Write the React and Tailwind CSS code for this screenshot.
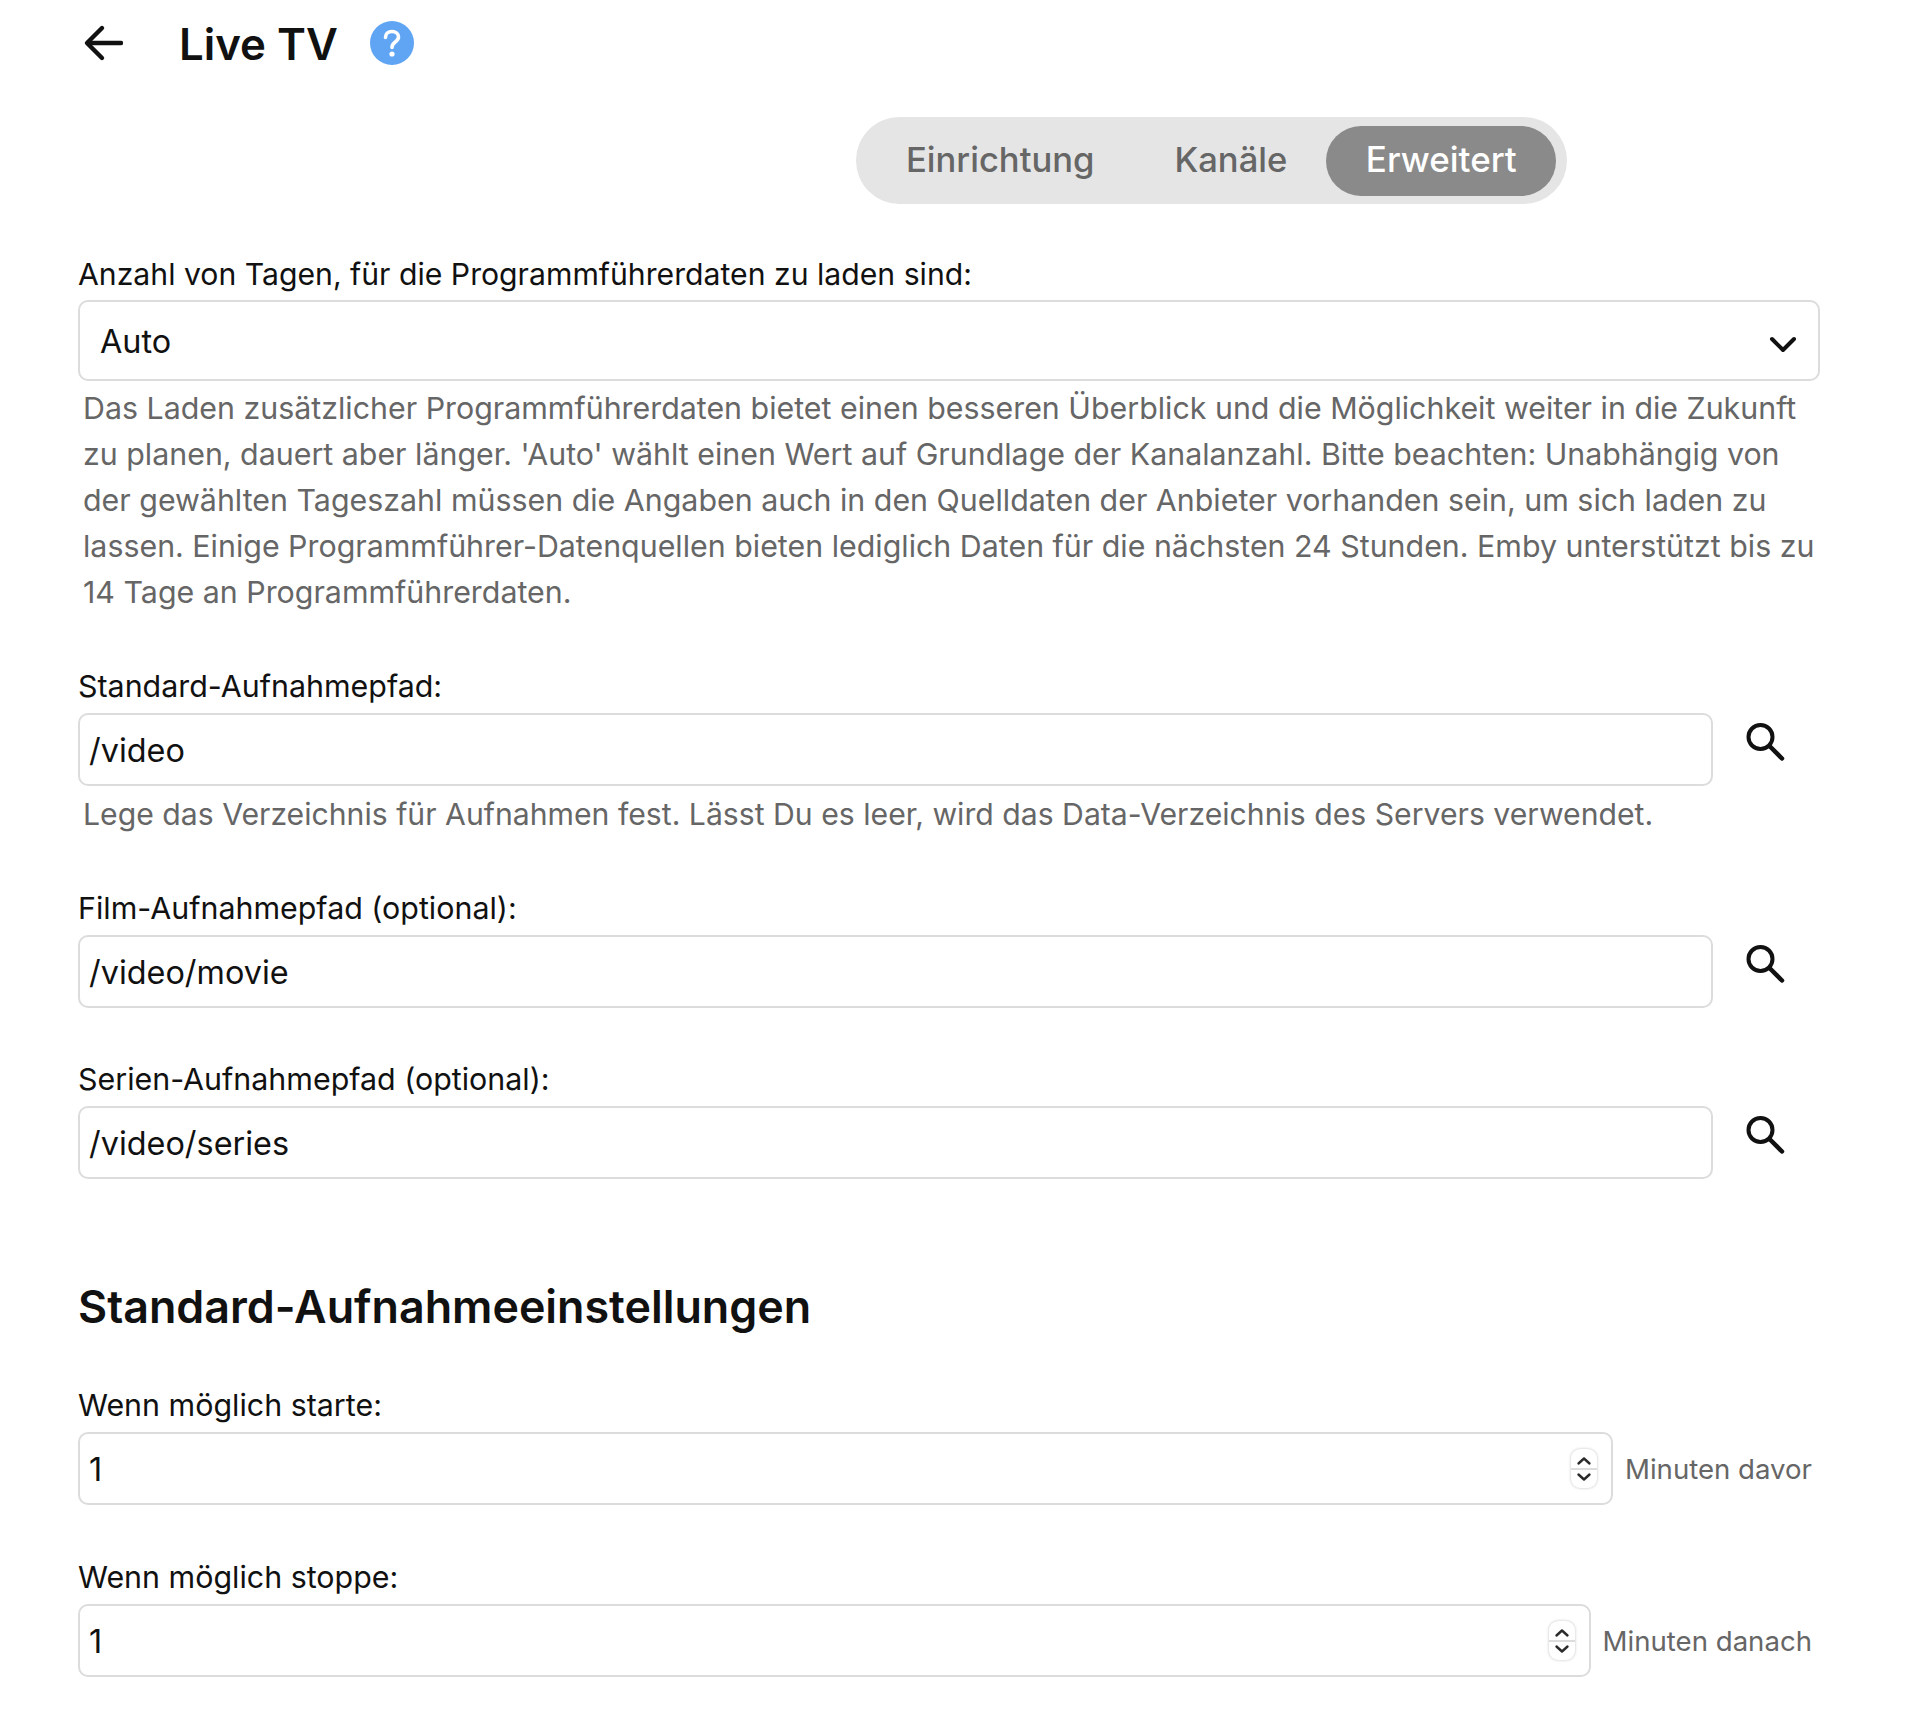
import React from "react";

const font = { fontFamily: "Inter, 'Noto Sans', sans-serif" };

function SearchIcon() {
  return (
    <svg width="40" height="40" viewBox="0 0 40 40" fill="none" stroke="#111" strokeWidth="4" strokeLinecap="round" className="shrink-0">
      <circle cx="15.5" cy="15" r="12" />
      <path d="M25 24.5L37 36.5" strokeWidth="4.5" />
    </svg>
  );
}

function Stepper() {
  return (
    <div className="w-[26px] h-[39px] rounded-[9px] bg-white shadow-[0_0_3px_rgba(0,0,0,0.25)] flex flex-col items-center justify-center shrink-0 relative">
      <svg width="26" height="39" viewBox="0 0 26 39" fill="none" strokeLinecap="round" strokeLinejoin="round">
        <path d="M0 20H26" stroke="#dcdcdc" strokeWidth="2" />
        <path d="M7.5 14.5L13 9.5L18.5 14.5" stroke="#2b2b2b" strokeWidth="2.4" />
        <path d="M7.5 25.5L13 30.5L18.5 25.5" stroke="#2b2b2b" strokeWidth="2.4" />
      </svg>
    </div>
  );
}

function Label({ children, className = "" }) {
  return <div className={`text-[30.4px] leading-[37px] pt-[1px] text-[#111] ${className}`}>{children}</div>;
}

function PathField({ label, value, help, className = "" }) {
  return (
    <div className={className}>
      <Label className="mb-[8px]">{label}</Label>
      <div className="flex items-start">
        <div className="w-[1635px] h-[73px] border-2 border-[#dcdcdc] rounded-[10px] flex items-center pl-[9px] pt-[3px] text-[32.4px] text-[#111] bg-white">{value}</div>
        <div className="ml-[32px] mt-[9px]"><SearchIcon /></div>
      </div>
      {help && <div className="pl-[5px] mt-[9px] pt-[1px] -mb-[1px] text-[30.2px] leading-[37px] text-[#666]">{help}</div>}
    </div>
  );
}

function NumberField({ label, suffix, className = "" }) {
  return (
    <div className={className}>
      <Label className="mb-[8px]">{label}</Label>
      <div className="flex items-center">
        <div className="flex-1 h-[73px] border-2 border-[#dcdcdc] rounded-[10px] flex items-center justify-between pl-[9px] pr-[14px] text-[32.4px] text-[#111] bg-white">
          <span className="pt-[4px]">1</span>
          <Stepper />
        </div>
        <div className="ml-[12px] mr-[8px] pt-[2px] text-[27.6px] text-[#666] whitespace-nowrap">{suffix}</div>
      </div>
    </div>
  );
}

export default function App() {
  return (
    <div style={font} className="w-[1910px] h-[1712px] bg-white overflow-hidden pl-[78px] pr-[90px]">
      <div className="flex items-center h-[86px] pl-[5px]">
        <svg width="40" height="38" viewBox="0 0 40 38" fill="none" stroke="#111" strokeWidth="4.4" strokeLinecap="round" strokeLinejoin="round" className="shrink-0">
          <path d="M38 19H5" />
          <path d="M19 4L4 19L19 34" />
        </svg>
        <h1 className="ml-[56px] mt-[4px] text-[43.8px] font-semibold text-[#111]">Live TV</h1>
        <svg width="44" height="44" viewBox="0 0 44 44" className="ml-[32px] shrink-0">
          <circle cx="22" cy="22" r="22" fill="#60a5f3" />
          <path d="M15.5 16.5C15.5 13 18.2 10.5 22 10.5C25.8 10.5 28.5 13 28.5 16C28.5 18.5 27 19.7 25 21.2C23 22.7 22 24 22 26.5" fill="none" stroke="#fff" strokeWidth="3.6" strokeLinecap="round" />
          <circle cx="22" cy="33" r="2.6" fill="#fff" />
        </svg>
      </div>

      <div className="flex justify-start mt-[31px] ml-[778px]">
        <div className="h-[87px] w-[711px] rounded-full bg-[#e5e5e5] flex items-center pl-[10px] text-[34.6px] font-medium text-[#666]">
          <div className="px-[40px] pb-[2px]">Einrichtung</div>
          <div className="pl-[40px] pr-[39px] pb-[2px]">Kanäle</div>
          <div className="h-[70px] w-[230px] pb-[2px] rounded-full bg-[#8a8a8a] text-white text-[35px] flex items-center justify-center">Erweitert</div>
        </div>
      </div>

      <div className="mt-[51px] mb-[8px] pt-[1px] text-[30.2px] leading-[36px] text-[#111]">Anzahl von Tagen, für die Programmführerdaten zu laden sind:</div>
      <div className="h-[81px] border-2 border-[#dcdcdc] rounded-[10px] flex items-center justify-between pl-[20px] pr-[21px] text-[32.4px] text-[#111]">
        <span className="pt-[4px]">Auto</span>
        <svg width="28" height="18" viewBox="0 0 28 18" fill="none" stroke="#111" strokeWidth="4" strokeLinecap="round" strokeLinejoin="round" className="mt-[6px]">
          <path d="M3 4L14 15L25 4" />
        </svg>
      </div>
      <div className="pl-[5px] mt-[4px] text-[30.37px] leading-[46px] text-[#666]">
        Das Laden zusätzlicher Programmführerdaten bietet einen besseren Überblick und die Möglichkeit weiter in die Zukunft zu planen, dauert aber länger. 'Auto' wählt einen Wert auf Grundlage der Kanalanzahl. Bitte beachten: Unabhängig von der gewählten Tageszahl müssen die Angaben auch in den Quelldaten der Anbieter vorhanden sein, um sich laden zu lassen. Einige Programmführer-Datenquellen bieten lediglich Daten für die nächsten 24 Stunden. Emby unterstützt bis zu 14 Tage an Programmführerdaten.
      </div>

      <PathField className="mt-[52px]" label="Standard-Aufnahmepfad:" value="/video" help="Lege das Verzeichnis für Aufnahmen fest. Lässt Du es leer, wird das Data-Verzeichnis des Servers verwendet." />
      <PathField className="mt-[57px]" label="Film-Aufnahmepfad (optional):" value="/video/movie" />
      <PathField className="mt-[52px]" label="Serien-Aufnahmepfad (optional):" value="/video/series" />

      <h2 className="mt-[99px] -mb-[1px] text-[44.8px] leading-[58px] font-semibold text-[#111]">Standard-Aufnahmeeinstellungen</h2>

      <NumberField className="mt-[51px]" label="Wenn möglich starte:" suffix="Minuten davor" />
      <NumberField className="mt-[53px]" label="Wenn möglich stoppe:" suffix="Minuten danach" />
    </div>
  );
}
